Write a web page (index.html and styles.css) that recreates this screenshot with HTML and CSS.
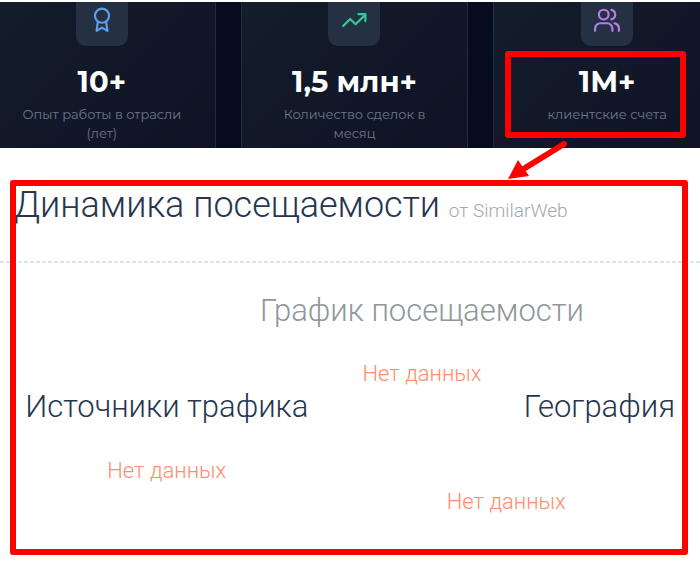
FILE: index.html
```html
<!DOCTYPE html>
<html lang="ru">
<head>
<meta charset="utf-8">
<meta name="viewport" content="width=device-width, initial-scale=1">
<title>Динамика посещаемости</title>
<link rel="stylesheet" href="styles.css">
</head>
<body>
<section class="stats">
  <div class="stats-grid">
    <article class="card">
      <div class="tile award">
        <svg viewBox="0 0 24 24" aria-hidden="true"><circle cx="12" cy="8" r="6.5"/><path d="M8.2 13.5 7 22l5-3 5 3-1.200-8.500"/></svg>
      </div>
      <strong class="value">10+</strong>
      <p class="label">Опыт работы в отрасли (лет)</p>
    </article>
    <article class="card">
      <div class="tile trend">
        <svg viewBox="0 0 24 24" aria-hidden="true"><path d="M2 17.500 8.500 11l5 5L22 7.500"/><path d="M16 6.500h6.500v6.500"/></svg>
      </div>
      <strong class="value">1,5 млн+</strong>
      <p class="label">Количество сделок в месяц</p>
    </article>
    <article class="card">
      <div class="tile users">
        <svg viewBox="0 0 24 24" aria-hidden="true"><circle cx="9" cy="7" r="4.500"/><path d="M1 22v-2a5 5 0 0 1 5-5h6a5 5 0 0 1 5 5v2"/><path d="M16 2.600a4.500 4.500 0 0 1 0 8.800"/><path d="M23 22v-2a5 5 0 0 0-4-4.900"/></svg>
      </div>
      <strong class="value">1М+</strong>
      <p class="label">клиентские счета</p>
      <div class="mark mark-value"></div>
    </article>
  </div>
</section>
<main class="report">
  <svg class="arrow" viewBox="0 0 60 42" aria-hidden="true"><path class="shaft" d="M56 5 17 29"/><path class="head" d="M0 40 10 21 21 37z"/></svg>
  <div class="mark mark-report"></div>
  <header class="report-head">
    <h1>Динамика посещаемости <small>от SimilarWeb</small></h1>
  </header>
  <section class="chart">
    <h2>График посещаемости</h2>
    <p class="empty">Нет данных</p>
  </section>
  <div class="columns">
    <section class="sources">
      <h2>Источники трафика</h2>
      <p class="empty">Нет данных</p>
    </section>
    <section class="geo">
      <h2>География</h2>
      <p class="empty">Нет данных</p>
    </section>
  </div>
</main>
</body>
</html>
```
FILE: styles.css
```css
* {
  box-sizing: border-box;
}

body {
  margin: 0;
  padding-top: 2px;
  background: #fff;
  font-family: Roboto, "Liberation Sans", sans-serif;
  font-weight: 300;
}

h1,
h2,
p {
  margin: 0;
  font-weight: 300;
}

.stats {
  overflow: hidden;
  background: #070b1e;
  font-family: Montserrat, Inter, sans-serif;
}

.stats-grid {
  display: grid;
  grid-template-columns: repeat(3, 1fr);
  gap: 25px;
  margin: 0 -21px 0 -12px;
}

.card {
  position: relative;
  display: flex;
  flex-direction: column;
  align-items: center;
  padding: 0 28px 5px;
  border: solid #222d3c;
  border-width: 0 1px;
  background: linear-gradient(135deg, #131d2c, #0f1325);
  text-align: center;
}

.tile {
  display: flex;
  justify-content: center;
  width: 52px;
  height: 44px;
  padding-top: 5px;
  border-radius: 0 0 10px 10px;
  background: #253143;
}

.tile svg {
  width: 26px;
  height: 26px;
  fill: none;
  stroke: currentColor;
  stroke-width: 2;
  stroke-linecap: round;
  stroke-linejoin: round;
}

.award {
  color: #5c9ff0;
}

.trend {
  color: #32cc92;
}

.users {
  color: #b57cec;
}

.value {
  margin-top: 18px;
  color: #fff;
  font-size: 29px;
  font-weight: 700;
  line-height: 36px;
}

.label {
  margin-top: 5px;
  color: #6b778b;
  font-size: 13px;
  font-weight: 400;
  line-height: 19px;
}

.mark {
  position: absolute;
  border: 6px solid #f00;
  border-radius: 3px;
  pointer-events: none;
}

.mark-value {
  top: 49px;
  right: 34px;
  bottom: 10px;
  left: 11px;
}

.report {
  position: relative;
  padding-bottom: 40px;
}

.mark-report {
  top: 32px;
  right: 12px;
  bottom: 0;
  left: 10px;
}

.arrow {
  position: absolute;
  top: -9px;
  right: 132px;
  width: 60px;
  height: 42px;
}

.shaft {
  fill: none;
  stroke: #f00;
  stroke-width: 6;
  stroke-linecap: round;
}

.head {
  fill: #f00;
}

.report-head {
  padding: 36px 14px 31px;
  background: repeating-linear-gradient(90deg, #dde6e8 0 4px, transparent 4px 6px) bottom / 100% 2px no-repeat;
}

h1 {
  color: #26364f;
  font-size: 36px;
  line-height: 42px;
}

small {
  color: #a3a8ac;
  font-size: 19px;
}

h2 {
  color: #26364f;
  font-size: 31px;
  line-height: 40px;
}

.empty {
  color: #ff8d6b;
  font-size: 22px;
  line-height: 26px;
  text-align: center;
}

.chart {
  margin-left: 24%;
  padding: 28px 24px 0 0;
  text-align: center;
}

.chart h2 {
  color: #90969b;
}

.chart .empty {
  margin-top: 30px;
}

.columns {
  display: grid;
  grid-template-columns: 1fr 1fr;
  padding-right: 25px;
}

.sources {
  padding-right: 4px;
  text-align: center;
}

.geo {
  text-align: right;
}

.sources .empty {
  margin-top: 31px;
}

.geo .empty {
  margin-top: 62px;
}
```
